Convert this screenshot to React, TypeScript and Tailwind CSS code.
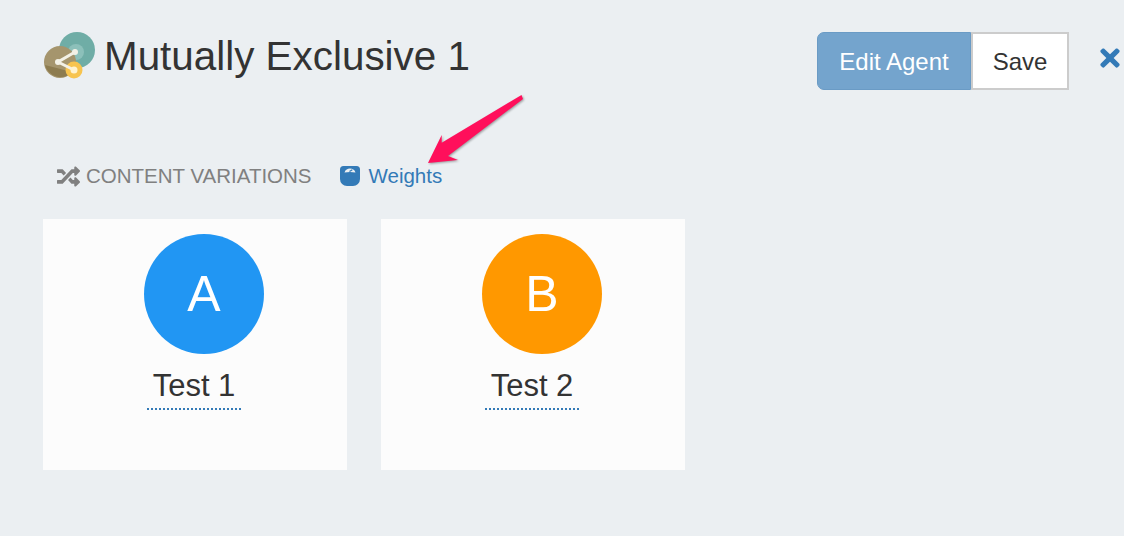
import { FaRandom, FaTimes } from "react-icons/fa";

function Logo() {
  return (
    <svg width="52" height="50" viewBox="0 0 52 50" className="shrink-0 mr-[9px]" style={{ filter: "blur(0.7px)" }}>
      <circle cx="34" cy="19" r="18" fill="#6fada6" />
      <circle cx="33" cy="21" r="8" fill="#8cc0ba" />
      <circle cx="17" cy="31" r="16" fill="#a5956d" />
      <path d="M2 34a16 16 0 0 0 27 7z" fill="#8d7c50" />
      <circle cx="31" cy="39" r="8.500" fill="#f7c44f" />
      <path d="M32 21 L15 31 L31 39" fill="none" stroke="#f3f1e6" strokeWidth="3" />
      <circle cx="32" cy="21" r="3" fill="#f3f1e6" />
      <circle cx="15" cy="31" r="3" fill="#f3f1e6" />
      <circle cx="31" cy="39" r="3.500" fill="#fff3cf" />
    </svg>
  );
}

function Scale() {
  return (
    <svg width="20" height="20" viewBox="0 0 20 20" className="shrink-0">
      <path
        fill="#337ab7"
        d="M3.500 0h13A3.500 3.500 0 0 1 20 3.500V13a7 7 0 0 1-7 7H7a7 7 0 0 1-7-7V3.500A3.500 3.500 0 0 1 3.500 0z"
      />
      <path fill="#ebeff2" d="M4.500 6.500C5.500 3.500 7.500 2.500 10 2.500s4.500 1 5.500 4c-3.500-.8-7.500-.8-11 0z" />
      <path d="M9.500 5.500l2.800-1.800" stroke="#337ab7" strokeWidth="1.300" />
    </svg>
  );
}

function Card({ letter, name, color }: { letter: string; name: string; color: string }) {
  return (
    <div className="w-[304px] h-[251px] bg-[#fcfcfc] pt-[15px] flex flex-col">
      <div
        className={`w-[120px] h-[120px] rounded-full ml-[101px] flex items-center justify-center text-white text-[50px] leading-none ${color}`}
      >
        {letter}
      </div>
      <div className="ml-[104px] w-[94px] mt-[14px] h-[42px] border-b-2 border-dotted border-[#337ab7] text-[#333] text-[31px] leading-[36px] text-center whitespace-nowrap">
        {name}
      </div>
    </div>
  );
}

export default function App() {
  return (
    <div
      className="relative w-[1124px] h-[536px] overflow-hidden bg-[#ebeff2] pl-[43px] pt-[32px]"
      style={{ fontFamily: '"Liberation Sans", Arial, sans-serif' }}
    >
      <div className="flex items-start h-[58px]">
        <div className="flex items-center w-[774px] shrink-0 -mt-[2px]">
          <Logo />
          <h1 className="text-[40.400px] leading-[52px] text-[#333] font-normal whitespace-nowrap">Mutually Exclusive 1</h1>
        </div>
        <button className="w-[154px] h-[58px] shrink-0 pt-[2px] bg-[#74a4cd] border border-[#6a9bc5] rounded-l-[7px] text-white text-[24px]">
          Edit Agent
        </button>
        <button className="w-[98px] h-[58px] shrink-0 pt-[2px] bg-white border-2 border-[#ccc] text-[#333] text-[24px]">Save</button>
        <FaTimes className="ml-[27px] mt-[12px] text-[#337ab7] shrink-0" size={28} />
      </div>

      <div className="flex items-center h-[30px] mt-[71px] pl-[14px] text-[20.500px] whitespace-nowrap">
        <FaRandom className="text-[#808080] mr-[6px]" size={23} />
        <span className="text-[#808080] mr-[28px]">CONTENT VARIATIONS</span>
        <Scale />
        <span className="text-[#337ab7] ml-[9px]">Weights</span>
      </div>

      <div className="flex gap-[34px] mt-[28px]">
        <Card letter="A" name="Test 1" color="bg-[#2196f3]" />
        <Card letter="B" name="Test 2" color="bg-[#ff9800]" />
      </div>

      <svg
        width="110"
        height="80"
        viewBox="0 0 110 80"
        className="absolute left-[420px] top-[90px]"
        style={{ filter: "drop-shadow(1px 1px 1px rgba(0,0,0,0.35))" }}
      >
        <path d="M101.500 5 L103 9 L28 66 L38 70 L8 73 L21.700 45 L21.700 52.700 Z" fill="#ff0f5b" />
      </svg>
    </div>
  );
}
